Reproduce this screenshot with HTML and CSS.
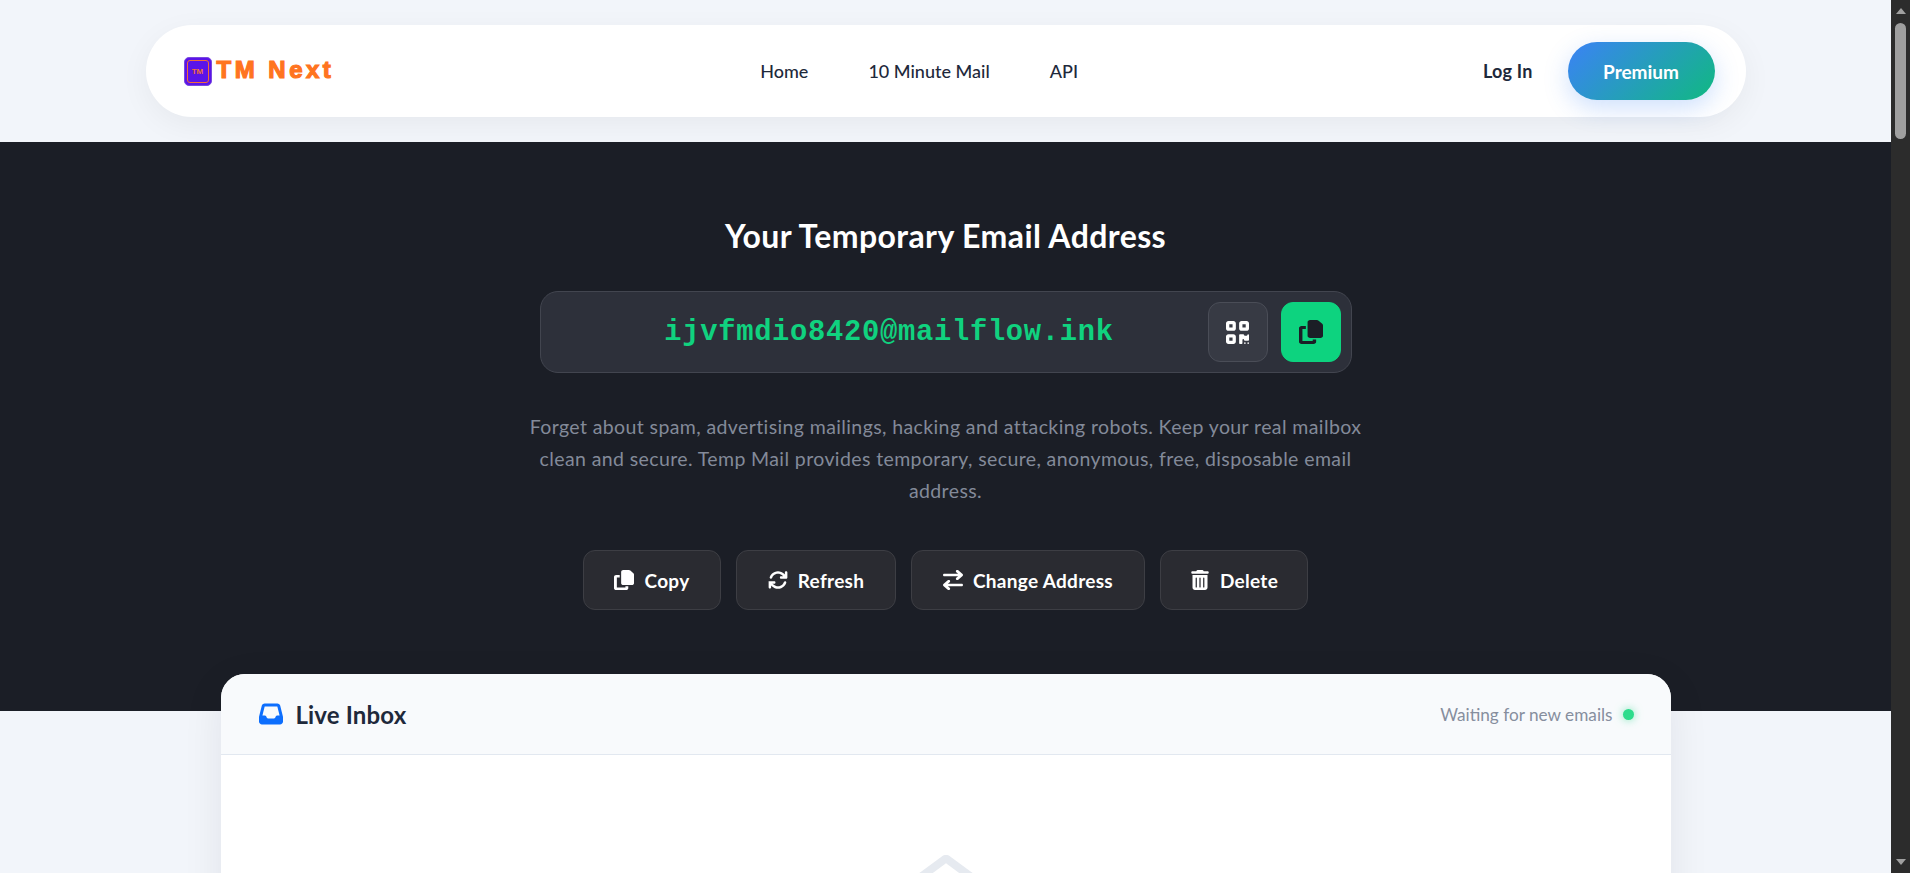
FILE: index.html
```html
<!DOCTYPE html>
<html lang="en">

<head>
    <meta charset="UTF-8">
    <meta name="viewport" content="width=device-width, initial-scale=1.0">
    <title>TM Next</title>

    <link rel="stylesheet" href="styles.css">

</head>

<body>
    <div class="page">

        <!-- top nav -->
        <header class="headerWrap">
            <nav class="navBar">
                <a class="logo" href="#">
                    <span class="logoBadge"><span class="logoBadgeInner">TM</span></span>
                    <span class="logoText">TM Next</span>
                </a>
                <div class="navLinks">
                    <a href="#">Home</a>
                    <a href="#">10 Minute Mail</a>
                    <a href="#">API</a>
                </div>
                <div class="navRight">
                    <a class="loginLink" href="#">Log In</a>
                    <a class="premiumBtn" href="#">Premium</a>
                </div>
            </nav>
        </header>

        <!-- dark hero -->
        <section class="hero">
            <h1>Your Temporary Email Address</h1>

            <div class="emailBox">
                <div class="emailValue">ijvfmdio8420@mailflow.ink</div>
                <button class="squareBtn" type="button" aria-label="QR code">
                    <svg class="icon qrIcon" viewBox="0 32 448 448" preserveAspectRatio="none"><path d="M0 80C0 53.5 21.5 32 48 32h96c26.5 0 48 21.5 48 48v96c0 26.5-21.5 48-48 48H48c-26.5 0-48-21.5-48-48V80zM64 96v64h64V96H64zM0 336c0-26.5 21.5-48 48-48h96c26.5 0 48 21.5 48 48v96c0 26.5-21.5 48-48 48H48c-26.5 0-48-21.5-48-48V336zm64 16v64h64V352H64zM304 32h96c26.5 0 48 21.5 48 48v96c0 26.5-21.5 48-48 48H304c-26.5 0-48-21.5-48-48V80c0-26.5 21.5-48 48-48zm80 64H320v64h64V96zM256 304c0-8.8 7.2-16 16-16h64c8.8 0 16 7.2 16 16s7.2 16 16 16h32c8.8 0 16-7.2 16-16s7.2-16 16-16s16 7.2 16 16v96c0 8.8-7.2 16-16 16H368c-8.8 0-16-7.2-16-16s-7.2-16-16-16s-16 7.2-16 16v64c0 8.8-7.2 16-16 16H272c-8.8 0-16-7.2-16-16V304zM368 480a16 16 0 1 1 0-32 16 16 0 1 1 0 32zm64 0a16 16 0 1 1 0-32 16 16 0 1 1 0 32z"/></svg>
                </button>
                <button class="squareBtn squareBtn-green" type="button" aria-label="Copy">
                    <svg class="icon copyIcon" viewBox="0 0 448 512" preserveAspectRatio="none"><path d="M208 0H332.1c12.7 0 24.9 5.1 33.9 14.1l67.9 67.9c9 9 14.1 21.2 14.1 33.9V336c0 26.5-21.5 48-48 48H208c-26.5 0-48-21.5-48-48V48c0-26.5 21.5-48 48-48zM48 128h80v64H64V448H256V416h64v48c0 26.5-21.5 48-48 48H48c-26.5 0-48-21.5-48-48V176c0-26.5 21.5-48 48-48z"/></svg>
                </button>
            </div>

            <p class="heroText">
                Forget about spam, advertising mailings, hacking and attacking robots. Keep your real mailbox<br>
                clean and secure. Temp Mail provides temporary, secure, anonymous, free, disposable email<br>
                address.
            </p>

            <div class="actions">
                <button class="actionBtn actionBtn-copy" type="button">
                    <svg class="icon" viewBox="0 0 448 512" preserveAspectRatio="none"><path d="M208 0H332.1c12.7 0 24.9 5.1 33.9 14.1l67.9 67.9c9 9 14.1 21.2 14.1 33.9V336c0 26.5-21.5 48-48 48H208c-26.5 0-48-21.5-48-48V48c0-26.5 21.5-48 48-48zM48 128h80v64H64V448H256V416h64v48c0 26.5-21.5 48-48 48H48c-26.5 0-48-21.5-48-48V176c0-26.5 21.5-48 48-48z"/></svg>
                    Copy
                </button>
                <button class="actionBtn actionBtn-refresh" type="button">
                    <svg class="icon" viewBox="0 0 512 512"><path d="M142.9 142.9c62.2-62.2 162.7-62.2 224.9 0L385.1 160H336c-17.7 0-32 14.3-32 32s14.3 32 32 32H464c17.7 0 32-14.3 32-32V64c0-17.7-14.3-32-32-32s-32 14.3-32 32v51.2L414.4 97.6c-87.5-87.5-229.3-87.5-316.8 0C73.2 122 55.6 150.7 44.8 181.4c-5.9 16.7 2.9 34.9 19.5 40.8s34.9-2.9 40.8-19.5c7.7-21.8 20.2-42.3 37.8-59.8zM16 312v128c0 17.7 14.3 32 32 32s32-14.3 32-32V396.9l17.6 17.5c87.5 87.4 229.3 87.4 316.7 0c24.4-24.4 42.1-53.1 52.9-83.7c5.9-16.7-2.9-34.9-19.5-40.8s-34.9 2.9-40.8 19.5c-7.7 21.8-20.2 42.3-37.8 59.8c-62.2 62.2-162.7 62.2-224.9 0l-.1-.1L109.6 352H160c17.7 0 32-14.3 32-32s-14.3-32-32-32H32c-4.3 0-8.4 .8-12.1 2.3C8.2 295.1 16 303 16 312z"/></svg>
                    Refresh
                </button>
                <button class="actionBtn actionBtn-change" type="button">
                    <svg class="icon" viewBox="0 0 448 512" preserveAspectRatio="none"><path d="M438.6 150.6c12.5-12.5 12.5-32.8 0-45.3l-96-96c-12.5-12.5-32.8-12.5-45.3 0s-12.5 32.8 0 45.3L338.7 96 32 96C14.3 96 0 110.3 0 128s14.3 32 32 32l306.7 0-41.4 41.4c-12.5 12.5-12.5 32.8 0 45.3s32.8 12.5 45.3 0l96-96zm-333.3 352c12.5 12.5 32.8 12.5 45.3 0s12.5-32.8 0-45.3L109.3 416 416 416c17.7 0 32-14.3 32-32s-14.3-32-32-32l-306.7 0 41.4-41.4c12.5-12.5 12.5-32.8 0-45.3s-32.8-12.5-45.3 0l-96 96c-12.5 12.5-12.5 32.8 0 45.3l96 96z"/></svg>
                    Change Address
                </button>
                <button class="actionBtn actionBtn-delete" type="button">
                    <svg class="icon" viewBox="0 0 448 512"><path d="M135.2 17.7C140.6 6.8 151.7 0 163.8 0H284.2c12.1 0 23.2 6.8 28.6 17.7L320 32h96c17.7 0 32 14.3 32 32s-14.3 32-32 32H32C14.3 96 0 81.7 0 64S14.3 32 32 32h96l7.2-14.3zM32 128H416V448c0 35.3-28.7 64-64 64H96c-35.3 0-64-28.7-64-64V128zm96 64c-8.8 0-16 7.2-16 16V432c0 8.8 7.2 16 16 16s16-7.2 16-16V208c0-8.8-7.2-16-16-16zm96 0c-8.8 0-16 7.2-16 16V432c0 8.8 7.2 16 16 16s16-7.2 16-16V208c0-8.8-7.2-16-16-16zm96 0c-8.8 0-16 7.2-16 16V432c0 8.8 7.2 16 16 16s16-7.2 16-16V208c0-8.8-7.2-16-16-16z"/></svg>
                    Delete
                </button>
            </div>
        </section>

        <!-- inbox card -->
        <section class="inboxCard">
            <div class="inboxHeader">
                <div class="inboxTitle">
                    <svg class="inboxIcon" viewBox="0 0 512 512"><path d="M121 32C91.6 32 66 52 58.9 80.5L1.9 308.4C.6 313.5 0 318.7 0 323.9V416c0 35.3 28.7 64 64 64H448c35.3 0 64-28.7 64-64V323.9c0-5.2-.6-10.4-1.9-15.5l-57-227.9C446 52 420.4 32 391 32H121zm0 64H391l48 192H387.8c-12.1 0-23.2 6.8-28.6 17.7l-14.3 28.6c-5.4 10.8-16.5 17.7-28.6 17.7H195.8c-12.1 0-23.2-6.8-28.6-17.7l-14.3-28.6c-5.4-10.8-16.5-17.7-28.6-17.7H73L121 96z"/></svg>
                    <h2>Live Inbox</h2>
                </div>
                <div class="inboxStatus">
                    Waiting for new emails
                    <span class="statusDot"></span>
                </div>
            </div>
            <div class="inboxEmpty">
                <svg class="emptyIcon" viewBox="0 0 512 512"><path d="M64 208.1L256 65.9 448 208.1v47.4L289.5 373c-9.7 7.2-21.4 11-33.5 11s-23.8-3.9-33.5-11L64 255.5V208.1zM256 0c-12.1 0-23.8 3.9-33.5 11L25.9 156.7C9.6 168.8 0 187.8 0 208.1V448c0 35.3 28.7 64 64 64H448c35.3 0 64-28.7 64-64V208.1c0-20.3-9.6-39.3-25.9-51.4L289.5 11C279.8 3.9 268.1 0 256 0z"/></svg>
            </div>
        </section>
    </div>

    <!-- window scrollbar, as seen in the screenshot -->
    <div class="scrollBar">
        <span class="scrollArrow scrollArrow-up"></span>
        <span class="scrollThumb"></span>
        <span class="scrollArrow scrollArrow-down"></span>
    </div>
</body>

</html>
```

FILE: styles.css
```css
*,
*::before,
*::after {
    margin: 0;
    padding: 0;
    box-sizing: border-box;
}

html,
body {
    height: 100%;
    overflow: hidden;
}

body {
    display: flex;
    background-color: #f2f5fa;
    font-family: "Lato", "Open Sans", sans-serif;
    color: #1e293b;
}

a {
    color: inherit;
    text-decoration: none;
}

button {
    font-family: inherit;
    border: none;
    cursor: pointer;
}

.page {
    flex: 1;
    min-width: 0;
    height: 100%;
    overflow: hidden;
}

.icon {
    display: block;
    fill: currentColor;
}

/* nav */

.headerWrap {
    height: 142px;
    padding-top: 25px;
}

.navBar {
    width: 1600px;
    height: 92px;
    margin: 0 auto;
    padding: 0 31px 0 38px;
    display: flex;
    justify-content: space-between;
    align-items: center;
    background-color: #fff;
    border-radius: 46px;
    box-shadow: 0 8px 30px rgba(0, 0, 0, 0.05);
}

.logo {
    display: flex;
    align-items: center;
    gap: 5px;
}

.logoBadge {
    width: 28px;
    height: 29px;
    padding: 2px;
    background-color: #5b14e8;
    border: 1px solid #7a4ae0;
    border-radius: 5px;
}

.logoBadgeInner {
    display: flex;
    justify-content: center;
    align-items: center;
    height: 100%;
    border: 1px solid #f26b3a;
    border-radius: 3px;
    font: bold 8px "Liberation Sans", sans-serif;
    color: #f2703a;
}

.logoText {
    padding-bottom: 2px;
    font: bold 24px "Liberation Sans", sans-serif;
    letter-spacing: 3.5px;
    color: #ff7420;
    -webkit-text-stroke: 1.2px #ff7420;
}

.navLinks {
    display: flex;
    gap: 60px;
    margin-left: 21px;
    font-size: 18px;
    font-weight: 500;
}

.navRight {
    display: flex;
    align-items: center;
    gap: 35px;
}

.loginLink {
    font-size: 18px;
    font-weight: 700;
    letter-spacing: 0.2px;
}

.premiumBtn {
    width: 147px;
    height: 58px;
    display: flex;
    justify-content: center;
    align-items: center;
    border-radius: 29px;
    background: linear-gradient(135deg, #3b82f6, #10b981);
    box-shadow: 0 8px 24px rgba(59, 130, 246, 0.25);
    color: #fff;
    font-size: 19px;
    font-weight: 700;
}

/* hero */

.hero {
    height: 569px;
    padding-top: 75px;
    display: flex;
    flex-direction: column;
    align-items: center;
    background-color: #1b1e26;
    color: #fff;
}

.hero h1 {
    font-size: 32px;
    line-height: 38px;
    font-weight: 700;
    letter-spacing: 0.4px;
}

.emailBox {
    width: 812px;
    height: 82px;
    margin-top: 36px;
    padding: 0 10px 0 43px;
    display: flex;
    align-items: center;
    gap: 13px;
    background-color: #2d303a;
    border: 1px solid #42454f;
    border-radius: 18px;
}

.emailValue {
    flex: 1;
    text-align: center;
    font: bold 28.8px "Liberation Mono", monospace;
    letter-spacing: 0.7px;
    color: #10d27f;
}

.squareBtn {
    flex: none;
    width: 60px;
    height: 60px;
    display: flex;
    justify-content: center;
    align-items: center;
    background-color: #373a44;
    border: 1px solid #4a4d57;
    border-radius: 12px;
    color: #fff;
}

.squareBtn-green {
    background-color: #0dd37f;
    border-color: #0dd37f;
    color: #1b1e26;
}

.qrIcon {
    width: 23px;
    height: 23px;
}

.copyIcon {
    width: 24px;
    height: 24px;
}

.heroText {
    margin-top: 38px;
    text-align: center;
    font-size: 19.5px;
    line-height: 32px;
    letter-spacing: 0.39px;
    color: #838a99;
}

.actions {
    display: flex;
    gap: 15px;
    margin-top: 43px;
}

.actionBtn {
    height: 60px;
    display: flex;
    justify-content: center;
    align-items: center;
    gap: 10px;
    background-color: #2a2b31;
    border: 1px solid #3d3e44;
    border-radius: 12px;
    color: #fff;
    font-size: 19px;
    font-weight: 700;
    letter-spacing: 0.3px;
}

.actionBtn .icon {
    width: 20px;
    height: 20px;
}

.actionBtn-copy {
    width: 138px;
}

.actionBtn-refresh {
    width: 160px;
}

.actionBtn-change {
    width: 234px;
}

.actionBtn-delete {
    width: 148px;
}

/* inbox */

.inboxCard {
    position: relative;
    width: 1450px;
    height: 600px;
    margin: -37px auto 0;
    background-color: #fff;
    border-radius: 24px 24px 0 0;
    box-shadow: 0 10px 40px rgba(15, 23, 42, 0.08);
    overflow: hidden;
}

.inboxHeader {
    height: 81px;
    padding: 0 37px 0 38px;
    display: flex;
    justify-content: space-between;
    align-items: center;
    background-color: #f8fafc;
    border-bottom: 1px solid #e2e8f0;
}

.inboxTitle {
    display: flex;
    align-items: center;
    gap: 13px;
}

.inboxIcon {
    display: block;
    width: 24px;
    height: 24px;
    fill: #0d6efd;
}

.inboxTitle h2 {
    font-size: 24px;
    font-weight: 700;
    letter-spacing: 0.15px;
    color: #1e293b;
}

.inboxStatus {
    display: flex;
    align-items: center;
    gap: 10px;
    font-size: 17.2px;
    color: #868e9e;
}

.statusDot {
    width: 11px;
    height: 11px;
    border-radius: 50%;
    background-color: #2ddc8c;
    box-shadow: 0 0 8px rgba(45, 220, 140, 0.6);
}

.inboxEmpty {
    padding-top: 100px;
    display: flex;
    justify-content: center;
}

.emptyIcon {
    display: block;
    width: 64px;
    height: 64px;
    fill: #e6eaf0;
}

/* fake window scrollbar */

.scrollBar {
    flex: none;
    width: 19px;
    height: 100%;
    display: flex;
    flex-direction: column;
    align-items: center;
    background-color: #2c2c2c;
}

.scrollArrow {
    flex: none;
    width: 0;
    height: 0;
    border-left: 5px solid transparent;
    border-right: 5px solid transparent;
}

.scrollArrow-up {
    margin-top: 8px;
    border-bottom: 6px solid #a0a0a0;
}

.scrollThumb {
    flex: none;
    width: 11px;
    height: 116px;
    margin-top: 9px;
    border-radius: 6px;
    background-color: #9f9f9f;
}

.scrollArrow-down {
    margin-top: auto;
    margin-bottom: 8px;
    border-top: 6px solid #a0a0a0;
}
```
